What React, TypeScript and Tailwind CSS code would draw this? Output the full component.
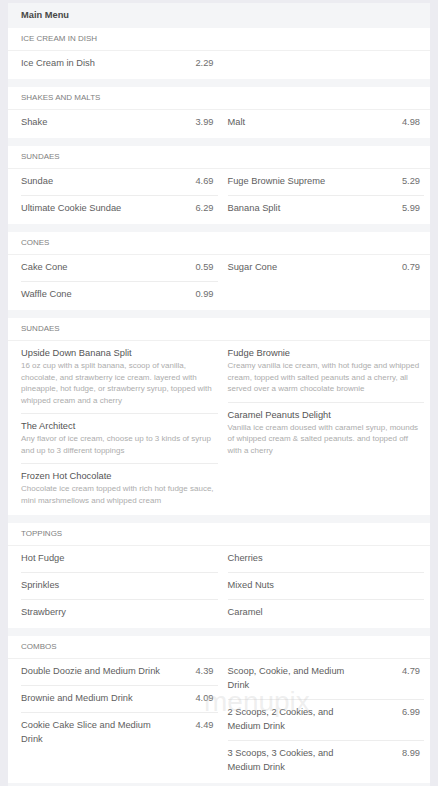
type Item = { name: string; price?: string; desc?: string }

interface Section {
  title: string
  left: Item[]
  right: Item[]
}

const SECTIONS: Section[] = [
  {
    title: "Ice Cream in Dish",
    left: [{ name: "Ice Cream in Dish", price: "2.29" }],
    right: [],
  },
  {
    title: "Shakes and Malts",
    left: [{ name: "Shake", price: "3.99" }],
    right: [{ name: "Malt", price: "4.98" }],
  },
  {
    title: "Sundaes",
    left: [
      { name: "Sundae", price: "4.69" },
      { name: "Ultimate Cookie Sundae", price: "6.29" },
    ],
    right: [
      { name: "Fuge Brownie Supreme", price: "5.29" },
      { name: "Banana Split", price: "5.99" },
    ],
  },
  {
    title: "Cones",
    left: [
      { name: "Cake Cone", price: "0.59" },
      { name: "Waffle Cone", price: "0.99" },
    ],
    right: [{ name: "Sugar Cone", price: "0.79" }],
  },
  {
    title: "Sundaes",
    left: [
      {
        name: "Upside Down Banana Split",
        desc: "16 oz cup with a split banana, scoop of vanilla, chocolate, and strawberry ice cream. layered with pineapple, hot fudge, or strawberry syrup, topped with whipped cream and a cherry",
      },
      {
        name: "The Architect",
        desc: "Any flavor of ice cream, choose up to 3 kinds of syrup and up to 3 different toppings",
      },
      {
        name: "Frozen Hot Chocolate",
        desc: "Chocolate ice cream topped with rich hot fudge sauce, mini marshmellows and whipped cream",
      },
    ],
    right: [
      {
        name: "Fudge Brownie",
        desc: "Creamy vanilla ice cream, with hot fudge and whipped cream, topped with salted peanuts and a cherry, all served over a warm chocolate brownie",
      },
      {
        name: "Caramel Peanuts Delight",
        desc: "Vanilla ice cream doused with caramel syrup, mounds of whipped cream & salted peanuts. and topped off with a cherry",
      },
    ],
  },
  {
    title: "Toppings",
    left: [{ name: "Hot Fudge" }, { name: "Sprinkles" }, { name: "Strawberry" }],
    right: [{ name: "Cherries" }, { name: "Mixed Nuts" }, { name: "Caramel" }],
  },
  {
    title: "Combos",
    left: [
      { name: "Double Doozie and Medium Drink", price: "4.39" },
      { name: "Brownie and Medium Drink", price: "4.09" },
      { name: "Cookie Cake Slice and Medium Drink", price: "4.49" },
    ],
    right: [
      { name: "Scoop, Cookie, and Medium Drink", price: "4.79" },
      { name: "2 Scoops, 2 Cookies, and Medium Drink", price: "6.99" },
      { name: "3 Scoops, 3 Cookies, and Medium Drink", price: "8.99" },
    ],
  },
]

function Row({ item }: { item: Item }) {
  if (item.desc) {
    return (
      <div className="border-b border-[#ededed] pt-[5px] pb-[7px] last:border-transparent">
        <p className="text-[9.3px] leading-[14px] text-[#555]">{item.name}</p>
        <p className="text-[8px] leading-[11.5px] text-[#adadad]">{item.desc}</p>
      </div>
    )
  }
  return (
    <div className="flex justify-between border-b border-[#ededed] pt-[5px] pb-[7px] pr-[4px] text-[9.3px] leading-[14px] last:border-transparent">
      <span className="w-[140px] text-[#5e5e5e]">{item.name}</span>
      {item.price && <span className="text-[#6e6e6e]">{item.price}</span>}
    </div>
  )
}

function Card({ section, watermark }: { section: Section; watermark?: boolean }) {
  return (
    <div className="relative bg-white pb-[1px]">
      <div className="flex h-[23px] items-center border-b border-[#f0f0f0] pl-[13px] text-[8px] uppercase text-[#808080]">
        {section.title}
      </div>
      <div className="grid grid-cols-2 gap-x-[10px] pl-[13px] pr-[6px]">
        <div className="flex flex-col">
          {section.left.map((item, i) => <Row key={i} item={item} />)}
        </div>
        <div className="flex flex-col">
          {section.right.map((item, i) => <Row key={i} item={item} />)}
        </div>
      </div>
      {watermark && (
        <span className="pointer-events-none absolute left-[196px] top-[52px] text-[28px] leading-[28px] text-[#c8c8c8]/30">
          menupix
        </span>
      )}
    </div>
  )
}

export default function App() {
  return (
    <div className="min-h-[786px] w-[438px] bg-[#ececf1] px-[8px] pt-[3px] font-['Liberation_Sans',Arial,sans-serif]">
      <div className="flex flex-col gap-[8px] bg-[#f4f5f7] pb-[6px]">
        <div>
          <div className="flex h-[25px] items-center pl-[13px] text-[9.3px] font-semibold text-[#484848]">
            Main Menu
          </div>
          <Card section={SECTIONS[0]} />
        </div>
        {SECTIONS.slice(1).map((s, i) => (
          <Card key={i} section={s} watermark={s.title === "Combos"} />
        ))}
      </div>
    </div>
  )
}
